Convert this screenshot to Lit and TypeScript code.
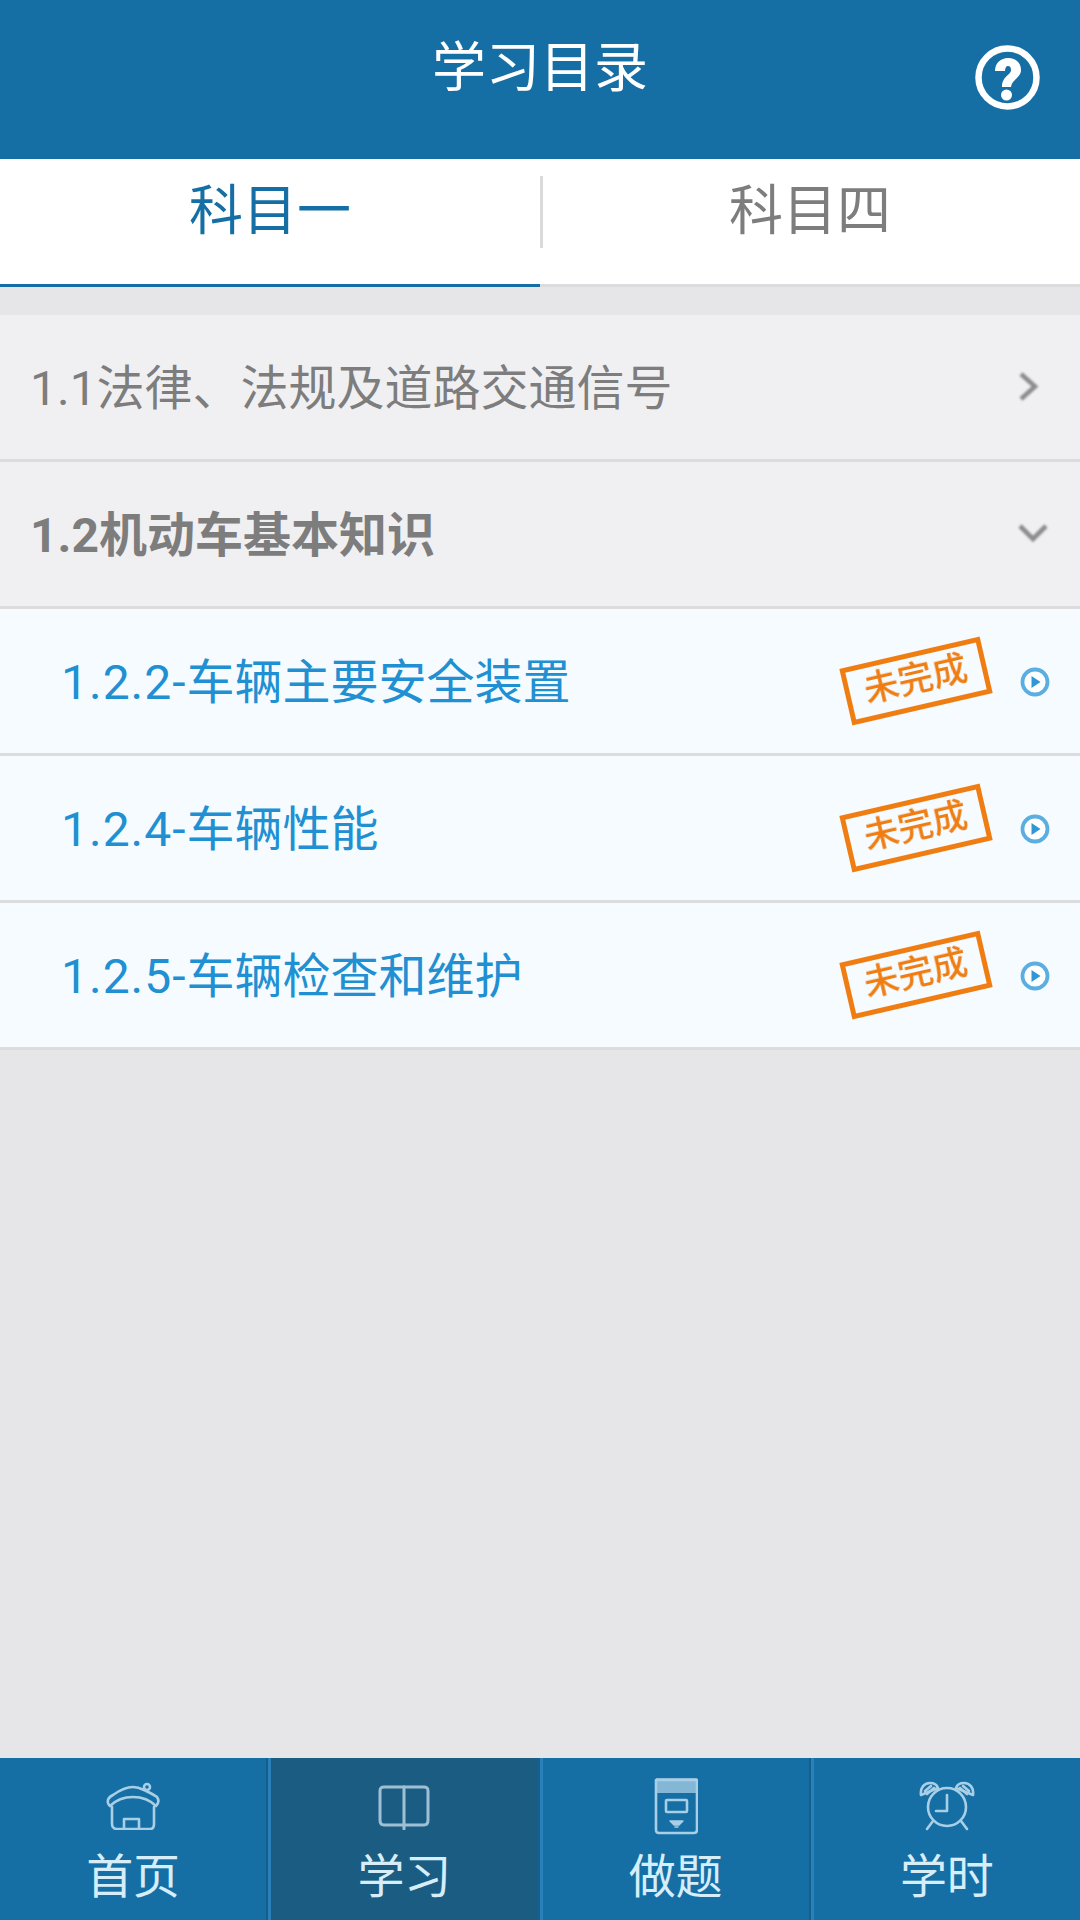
import { LitElement, html, css, svg } from "lit";
import { customElement } from "lit/decorators.js";

const houseIcon = svg`<svg class="nav-icon" width="54" height="48" viewBox="0 0 54 48" fill="none" stroke="#a9cfe6" stroke-width="2.6" stroke-linecap="round" stroke-linejoin="round">
  <path d="M2 21C1 17 3 15 7 13C14 8 21 5 27 5C31 5 34 6 38 8C42 10 47 12 51 15C53 18 53 21 50 24C44 18 36 15 27 15C18 15 10 18 4 24C3 23 2 22 2 21Z"/>
  <circle cx="41" cy="5" r="3"/>
  <path d="M6 25V42C6 45 8 47 11 47H44C47 47 48 45 48 42V25"/>
  <path d="M18 47V37H33V47"/>
</svg>`;

const bookIcon = svg`<svg class="nav-icon" width="52" height="48" viewBox="0 0 52 48" fill="none" stroke="#9fc0d4" stroke-width="3" stroke-linecap="round" stroke-linejoin="round">
  <path d="M26 5H6C3 5 2 6 2 9V38C2 41 3 43 6 43H26"/>
  <path d="M26 5H46C49 5 50 6 50 9V38C50 41 49 43 46 43H26"/>
  <path d="M26 5V47"/>
</svg>`;

const docIcon = svg`<svg class="nav-icon" width="44" height="58" viewBox="0 0 44 58" fill="none" stroke="#a9cfe6" stroke-width="2.6" stroke-linecap="round" stroke-linejoin="round">
  <path d="M3 3H43V53C43 55 42 56 40 56H5C3 56 2 55 2 53V3Z"/>
  <rect x="2" y="1" width="41" height="15" fill="#a9cfe6" stroke="none" opacity=".75"/>
  <rect x="12" y="23" width="21" height="12" rx="1"/>
  <path d="M16 44H29L25 48H20ZM21 50H24" fill="#a9cfe6" stroke-width="1.4"/>
</svg>`;

const clockIcon = svg`<svg class="nav-icon" width="56" height="50" viewBox="0 0 56 50" fill="none" stroke="#a9cfe6" stroke-width="2.6" stroke-linecap="round" stroke-linejoin="round">
  <circle cx="28" cy="26" r="19"/>
  <path d="M28 14V30H17"/>
  <path d="M2 14C1 7 5 2 11 2C15 2 18 4 19 7Z"/>
  <path d="M54 14C55 7 51 2 45 2C41 2 38 4 37 7Z"/>
  <path d="M6 10L12 5M8 13L15 7M50 10L44 5M48 13L41 7"/>
  <path d="M14 40L8 48M42 40L48 48"/>
</svg>`;

const playIcon = svg`<svg class="play" width="30" height="30" viewBox="0 0 30 30"><circle cx="15" cy="15" r="12.5" fill="#fff" stroke="#5aaee0" stroke-width="3.8"/><path d="M11.5 9L20.5 15L11.5 21Z" fill="#2f97d6"/></svg>`;

const chevronRight = svg`<svg class="chev right" width="30" height="30" viewBox="0 0 30 30" fill="none" stroke="#8c8c8c" stroke-width="4.6"><path d="M8 2L22 14.5L8 27"/></svg>`;
const chevronDown = svg`<svg class="chev" width="30" height="30" viewBox="0 0 30 30" fill="none" stroke="#8c8c8c" stroke-width="4.6"><path d="M2 7L15 20L28 7"/></svg>`;

@customElement("app-root")
export class AppRoot extends LitElement {
  static styles = css`
    :host {
      display: flex;
      flex-direction: column;
      width: 1080px;
      height: 1920px;
      background: #e6e6e8;
      font-family: Roboto, "Noto Sans CJK SC", sans-serif;
      overflow: hidden;
    }
    .header {
      height: 159px;
      flex: none;
      background: #156fa5;
      display: flex;
      align-items: flex-start;
      justify-content: center;
      position: relative;
      box-sizing: border-box;
      padding-top: 32px;
    }
    .title {
      color: #fff;
      font-size: 54px;
      line-height: 74px;
    }
    .help {
      position: absolute;
      left: 975px;
      top: 45px;
      width: 65px;
      height: 65px;
    }
    .tabs {
      height: 128px;
      flex: none;
      display: flex;
      background: #fff;
      box-sizing: border-box;
      border-bottom: 3px solid #dcdcde;
    }
    .tab {
      flex: 1;
      font-size: 54px;
      line-height: 74px;
      color: #7d7d7d;
      text-align: center;
      padding-top: 16px;
      margin-bottom: -3px;
      box-sizing: border-box;
      position: relative;
    }
    .tab.active {
      color: #156fa5;
      border-bottom: 3px solid #156fa5;
    }
    .tab + .tab::before {
      content: "";
      position: absolute;
      left: 0;
      top: 17px;
      height: 72px;
      width: 3px;
      background: #dadada;
    }
    .list {
      flex: 1;
      padding-top: 28px;
    }
    .row {
      height: 147px;
      box-sizing: border-box;
      border-bottom: 3px solid #dcdcdc;
      display: flex;
      align-items: center;
      font-size: 48px;
    }
    .text {
      padding-bottom: 7px;
    }
    .group {
      background: #f0f0f2;
      color: #7d7d7d;
      padding: 0 30px 0 30px;
      justify-content: space-between;
    }
    .group.open {
      font-weight: 700;
    }
    .chev {
      filter: blur(0.8px);
      flex: none;
      margin-right: 2px;
    }
    .chev.right {
      margin-right: 7px;
    }
    .item {
      background: #f6fbff;
      color: #2090d2;
      padding: 0 30px 0 61px;
    }
    .item .text {
      flex: 1;
    }
    .num {
      letter-spacing: 1px;
    }
    .stamp {
      flex: none;
      width: 144px;
      height: 58px;
      box-sizing: border-box;
      border: 5px solid #ef7d12;
      color: #ef7d12;
      font-size: 35px;
      line-height: 46px;
      font-weight: 500;
      text-align: center;
      transform: rotate(-13deg);
      margin-right: 32px;
      filter: blur(0.7px);
      white-space: nowrap;
    }
    .play {
      margin-top: 2px;
    }
    .nav {
      height: 162px;
      flex: none;
      display: flex;
      background: #156fa5;
    }
    .nav-item {
      flex: 1;
      box-sizing: border-box;
      display: flex;
      flex-direction: column;
      align-items: center;
      color: #d6edfa;
      font-size: 47px;
      line-height: 54px;
      border-right: 2px solid #145f8e;
      border-left: 3px solid #2a80b8;
    }
    .nav-item:first-child { border-left: none; }
    .nav-item:last-child { border-right: none; }
    .nav-item.active { background: #1b5c82; }
    .icon-box {
      height: 92px;
      display: flex;
      align-items: center;
      justify-content: center;
      padding-top: 4px;
      box-sizing: border-box;
    }
    .nav-icon { filter: blur(0.5px); }
  `;

  private items: [string, string][] = [
    ["1.2.2-", "车辆主要安全装置"],
    ["1.2.4-", "车辆性能"],
    ["1.2.5-", "车辆检查和维护"],
  ];

  render() {
    return html`
      <div class="header">
        <div class="title">学习目录</div>
        <svg class="help" viewBox="0 0 65 65" fill="none">
          <circle cx="32.5" cy="32.5" r="29" stroke="#fff" stroke-width="6.5"/>
          <path d="M20 26C20 18 26 13 33 13C41 13 46 18 46 25C46 33 37 34 36 42H27C27 31 36 30 36 25C36 22.5 35 21 33 21C31 21 30 23 30 26Z" fill="#fff"/>
          <circle cx="31.5" cy="50" r="5.5" fill="#fff"/>
        </svg>
      </div>
      <div class="tabs">
        <div class="tab active">科目一</div>
        <div class="tab">科目四</div>
      </div>
      <div class="list">
        <div class="row group"><span class="text">1.1法律、法规及道路交通信号</span>${chevronRight}</div>
        <div class="row group open"><span class="text">1.2机动车基本知识</span>${chevronDown}</div>
        ${this.items.map(
          ([n, t]) => html`<div class="row item">
            <span class="text"><span class="num">${n}</span>${t}</span>
            <span class="stamp">未完成</span>
            ${playIcon}
          </div>`
        )}
      </div>
      <div class="nav">
        <div class="nav-item"><div class="icon-box">${houseIcon}</div>首页</div>
        <div class="nav-item active"><div class="icon-box">${bookIcon}</div>学习</div>
        <div class="nav-item"><div class="icon-box">${docIcon}</div>做题</div>
        <div class="nav-item"><div class="icon-box">${clockIcon}</div>学时</div>
      </div>
    `;
  }
}
